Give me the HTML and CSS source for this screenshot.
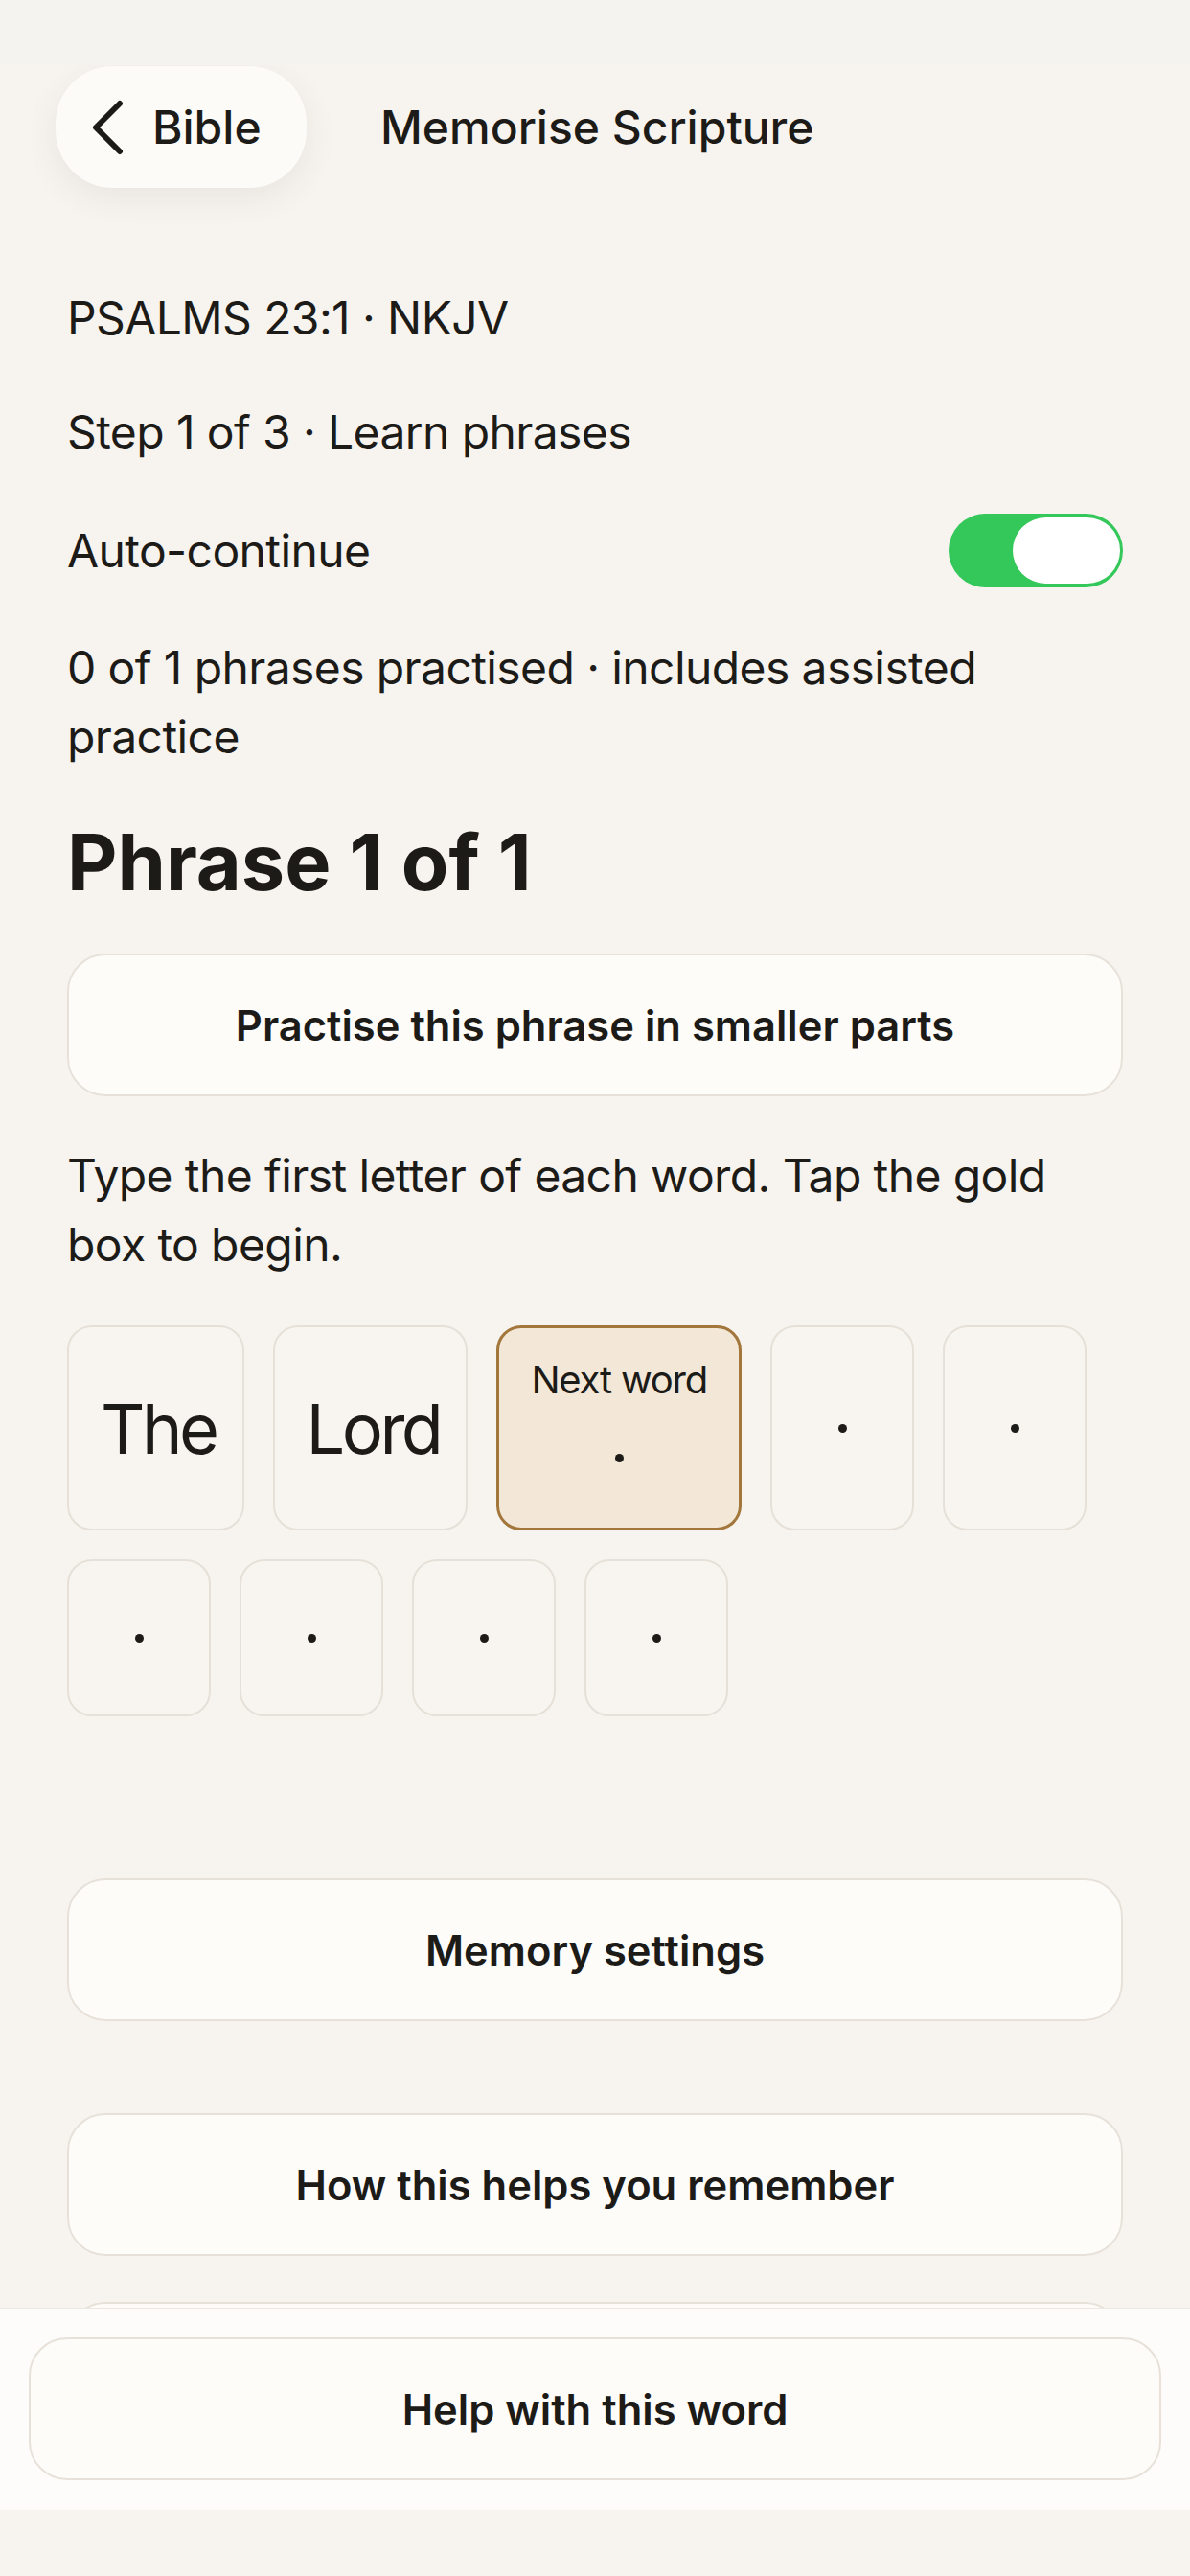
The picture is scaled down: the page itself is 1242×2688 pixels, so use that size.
FILE: index.html
```html
<!DOCTYPE html>
<html lang="en">
<head>
    <meta charset="UTF-8">
    <title>Memorise Scripture</title>
    <meta name="viewport" content="width=device-width, initial-scale=1">
    <link rel="stylesheet" href="styles.css">
</head>
<body>
<div class="screen">
    <div class="status"></div>

    <main class="content">
        <header class="topbar">
            <button class="back">
                <svg width="34" height="58" viewBox="0 0 34 58" fill="none" stroke="#1d1b18" stroke-width="6" stroke-linecap="round" stroke-linejoin="round">
                    <polyline points="30,4 5,29 30,54"/>
                </svg>
                <span>Bible</span>
            </button>
            <h2 class="title">Memorise Scripture</h2>
        </header>

        <section class="page">
            <p class="line">PSALMS 23:1 · NKJV</p>
            <p class="line">Step 1 of 3 · Learn phrases</p>

            <div class="toggle-row">
                <span>Auto-continue</span>
                <div class="toggle on"><div class="knob"></div></div>
            </div>

            <p class="line">0 of 1 phrases practised · includes assisted practice</p>

            <h1 class="phrase">Phrase 1 of 1</h1>

            <button class="card-btn">Practise this phrase in smaller parts</button>

            <p class="line">Type the first letter of each word. Tap the gold box to begin.</p>

            <div class="tiles">
                <div class="tile word">The</div>
                <div class="tile word">Lord</div>
                <div class="tile next">
                    <span class="next-label">Next word</span>
                    <span class="dot"></span>
                </div>
                <div class="tile"><span class="dot"></span></div>
                <div class="tile"><span class="dot"></span></div>
                <div class="tile"><span class="dot"></span></div>
                <div class="tile"><span class="dot"></span></div>
                <div class="tile"><span class="dot"></span></div>
                <div class="tile"><span class="dot"></span></div>
            </div>

            <div class="actions">
                <button class="card-btn">Memory settings</button>
                <button class="card-btn">How this helps you remember</button>
                <button class="card-btn more" aria-hidden="true"></button>
            </div>
        </section>
    </main>

    <footer class="dock">
        <button class="card-btn wide">Help with this word</button>
    </footer>
    <div class="home-area"></div>
</div>
</body>
</html>
```

FILE: styles.css
```css
body {
    margin: 0;
    font-family: Inter, "Liberation Sans", Arial, sans-serif;
    color: #1d1b18;
    background: #f7f4f0;
}
.screen {
    width: 1242px;
    height: 2688px;
    display: flex;
    flex-direction: column;
    overflow: hidden;
}
.status {
    height: 68px;
    background: #f5f3f0;
}
.content {
    flex: 1;
    overflow: hidden;
    background: #f7f4f0;
}

/* header */
.topbar {
    display: flex;
    align-items: center;
    gap: 77px;
    padding: 1px 58px 0;
}
.back {
    display: flex;
    align-items: center;
    gap: 30px;
    height: 127px;
    width: 262px;
    padding: 0 0 0 37px;
    border: none;
    border-radius: 60px;
    background: #fcfbf8;
    box-shadow: 0 10px 34px rgba(60, 45, 25, 0.08);
    font-family: inherit;
    font-size: 48px;
    font-weight: 500;
    color: #1d1b18;
}
.title {
    margin: 0;
    font-size: 48px;
    font-weight: 500;
}

/* main column */
.page {
    display: flex;
    flex-direction: column;
    gap: 47px;
    padding: 100px 70px 0;
}
.line {
    margin: 0;
    font-size: 48px;
    line-height: 72px;
    letter-spacing: -0.6px;
}
.toggle-row {
    display: flex;
    align-items: center;
    justify-content: space-between;
    height: 80px;
    font-size: 48px;
    letter-spacing: -0.6px;
}
.toggle {
    display: flex;
    justify-content: flex-end;
    align-items: center;
    width: 182px;
    height: 77px;
    padding: 0 3px;
    box-sizing: border-box;
    border-radius: 40px;
    background: #34c759;
}
.knob {
    width: 112px;
    height: 69px;
    border-radius: 35px;
    background: #ffffff;
}
.phrase {
    margin: 0;
    font-size: 81px;
    line-height: 96px;
    font-weight: 700;
}

.card-btn {
    display: block;
    width: 100%;
    height: 149px;
    border: 2px solid #e7e1d9;
    border-radius: 40px;
    background: #fdfcf9;
    font-family: inherit;
    font-size: 43.5px;
    font-weight: 600;
    color: #1d1b18;
}

/* word tiles */
.tiles {
    display: flex;
    flex-wrap: wrap;
    gap: 30px;
    margin-top: 1px;
}
.tile {
    display: flex;
    flex-direction: column;
    align-items: center;
    justify-content: center;
    min-width: 150px;
    min-height: 164px;
    padding: 0 33px;
    box-sizing: border-box;
    border: 2px solid #e6e0d8;
    border-radius: 26px;
    background: #f8f5f1;
}
.tile.word {
    font-size: 72px;
    letter-spacing: -3.5px;
    padding: 0 27px 0 33px;
}
.tile.next {
    justify-content: flex-start;
    padding: 30px 33px 0;
    height: 214px;
    background: #f3e8d7;
    border: 3px solid #a3773c;
}
.next-label {
    font-size: 40px;
    line-height: 48px;
    letter-spacing: -1.2px;
}
.tile.next .dot {
    margin-top: 53px;
}
.dot {
    width: 9px;
    height: 9px;
    border-radius: 50%;
    background: #1d1b18;
}

.actions {
    display: flex;
    flex-direction: column;
    margin-top: 122px;
}
.actions .card-btn + .card-btn {
    margin-top: 96px;
}
.actions .card-btn.more {
    margin-top: 48px;
}

/* bottom dock */
.dock {
    height: 211px;
    box-sizing: border-box;
    padding: 30px 30px 0;
    border-top: 1px solid #ece7e0;
    background: #fdfcfa;
}
.home-area {
    height: 69px;
    background: #f7f4f0;
}
```
